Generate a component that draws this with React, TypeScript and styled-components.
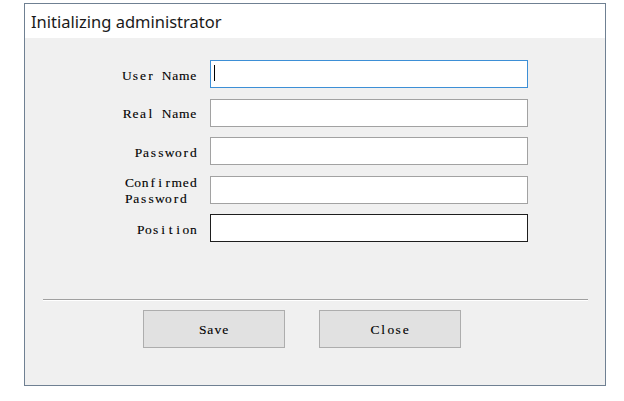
import { Fragment } from 'react'
import styled, { createGlobalStyle } from 'styled-components'

const GlobalStyle = createGlobalStyle`
  html, body {
    margin: 0;
    padding: 0;
    background: #ffffff;
  }
`

const Window = styled.div`
  box-sizing: border-box;
  width: 582px;
  height: 383px;
  margin: 3px 0 0 24px;
  border: 1px solid #6f8092;
  background: #f0f0f0;
  display: flex;
  flex-direction: column;
`

const TitleBar = styled.div`
  height: 34px;
  background: #ffffff;
  display: flex;
  align-items: center;
  padding-left: 6px;
  font-family: "Noto Sans", "Open Sans", sans-serif;
  font-size: 16.5px;
  color: #1a1a1a;
`

const Form = styled.div`
  display: grid;
  grid-template-columns: 172px 318px;
  grid-auto-rows: 28px;
  column-gap: 13px;
  row-gap: 10.5px;
  margin-top: 22px;
`

const Label = styled.label`
  justify-self: end;
  align-self: center;
  padding-top: 3px;
  color: #000;
`

// the dialog font is a fixed-pitch serif, so each letter gets its own cell
const Line = styled.div`
  display: flex;
  font-family: "Liberation Serif", serif;
  font-size: 13.5px;
  line-height: 16px;
  -webkit-text-stroke: 0.12px #000;
`

const Cell = styled.span`
  display: inline-block;
  min-width: 7.5px;
  text-align: center;
`

const Field = styled.div<{ $state?: 'focus' | 'hover' }>`
  box-sizing: border-box;
  height: 28px;
  background: #fff;
  border: 1px solid
    ${(p) => (p.$state === 'focus' ? '#3d8fd6' : p.$state === 'hover' ? '#1e1e1e' : '#a2a2a2')};
  position: relative;
`

const Caret = styled.span`
  position: absolute;
  left: 3px;
  top: 4px;
  width: 1px;
  height: 16px;
  background: #000;
`

const Separator = styled.div`
  margin: 57px 17px 0 18px;
  height: 1px;
  background: #a0a0a0;
  border-bottom: 1px solid #ffffff;
`

const ButtonRow = styled.div`
  display: flex;
  gap: 34px;
  padding-left: 118px;
  margin-top: 9px;
`

const Button = styled.button`
  box-sizing: border-box;
  width: 142px;
  height: 38px;
  background: #e1e1e1;
  border: 1px solid #adadad;
  color: #000;
  padding: 2px 0 0;
  display: flex;
  align-items: center;
  justify-content: center;
`

function MonoText({ text }: { text: string }) {
  return (
    <>
      {text.split('\n').map((line, i) => (
        <Line key={i}>
          {line.split('').map((ch, j) => (
            <Cell key={j}>{ch === ' ' ? '\u00a0' : ch}</Cell>
          ))}
        </Line>
      ))}
    </>
  )
}

const fields = [
  { label: 'User Name', state: 'focus' as const },
  { label: 'Real Name' },
  { label: 'Password' },
  { label: 'Confirmed\nPassword' },
  { label: 'Position', state: 'hover' as const },
]

function App() {
  return (
    <>
      <GlobalStyle />
      <Window>
        <TitleBar>Initializing administrator</TitleBar>
        <Form>
          {fields.map((f) => (
            <Fragment key={f.label}>
              <Label>
                <MonoText text={f.label} />
              </Label>
              <Field $state={f.state}>
                {f.state === 'focus' && <Caret />}
              </Field>
            </Fragment>
          ))}
        </Form>
        <Separator />
        <ButtonRow>
          <Button>
            <MonoText text="Save" />
          </Button>
          <Button>
            <MonoText text="Close" />
          </Button>
        </ButtonRow>
      </Window>
    </>
  )
}

export default App
